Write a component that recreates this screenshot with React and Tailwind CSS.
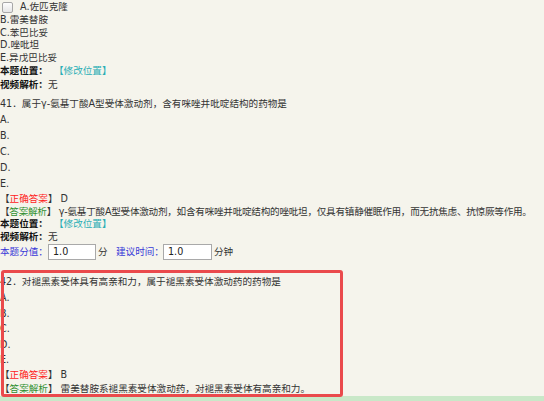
export default function App() {
  const ff = "font-['DejaVu_Sans','Noto_Sans_CJK_SC',sans-serif]";
  return (
    <div className={`relative w-[544px] h-[401px] overflow-hidden bg-[#f5f4ec] text-[#333] text-[9.6px] flex flex-col whitespace-nowrap ${ff}`}>
      <div className="flex-1 min-h-0 flex flex-col">
        {/* previous question tail */}
        <div className="flex items-center h-[14px] shrink-0">
          <span className="ml-[2px] w-[11px] h-[11px] border border-[#a8a8a8] rounded-[2px] bg-gradient-to-b from-[#fdfdfd] to-[#e6e6e6]" />
          <span className="ml-[7px]">A.佐匹克隆</span>
        </div>
        <div className="leading-[12.5px] h-[12.5px]">B.雷美替胺</div>
        <div className="leading-[12.5px] h-[12.5px]">C.苯巴比妥</div>
        <div className="leading-[12.5px] h-[12.5px]">D.唑吡坦</div>
        <div className="leading-[12.5px] h-[12.5px]">E.异戊巴比妥</div>
        <div className="leading-[14px] h-[14px] flex">
          <span className="font-bold text-[#111] w-[54px]">本题位置：</span>
          <span className="text-[#2aaeb5]">【修改位置】</span>
        </div>
        <div className="leading-[14px] h-[14px]">
          <span className="font-bold text-[#111]">视频解析：</span>无
        </div>

        {/* question 41 */}
        <div className="mt-[4px] leading-[16px] h-[16px]">41．属于γ-氨基丁酸A型受体激动剂，含有咪唑并吡啶结构的药物是</div>
        <div className="leading-[16px] h-[16px]">A.</div>
        <div className="leading-[16px] h-[16px]">B.</div>
        <div className="leading-[16px] h-[16px]">C.</div>
        <div className="leading-[16px] h-[16px]">D.</div>
        <div className="leading-[16px] h-[16px]">E.</div>
        <div className="leading-[13px] h-[13px]">
          【<span className="text-[#f22]">正确答案</span>】 D
        </div>
        <div className="leading-[13px] h-[13px] tracking-[-0.25px]">
          【<span className="text-[#2f8f2f]">答案解析</span>】 γ-氨基丁酸A型受体激动剂，如含有咪唑并吡啶结构的唑吡坦，仅具有镇静催眠作用，而无抗焦虑、抗惊厥等作用。
        </div>
        <div className="leading-[12px] h-[12px] flex">
          <span className="font-bold text-[#111] w-[54px]">本题位置：</span>
          <span className="text-[#2aaeb5]">【修改位置】</span>
        </div>
        <div className="leading-[14px] h-[14px]">
          <span className="font-bold text-[#111]">视频解析：</span>无
        </div>
        <div className="flex items-center h-[16px] shrink-0">
          <span className="text-[#3838d8] w-[48px] shrink-0">本题分值：</span>
          <div className="w-[48px] h-[16px] shrink-0 border border-[#a9a9a9] bg-white pl-[4px] leading-[14px] text-[#222]">1.0</div>
          <span className="ml-[2px] w-[18px] shrink-0">分</span>
          <span className="text-[#3838d8] w-[47px] shrink-0">建议时间：</span>
          <div className="w-[49px] h-[16px] shrink-0 border border-[#a9a9a9] bg-white pl-[4px] leading-[14px] text-[#222]">1.0</div>
          <span className="ml-[2px]">分钟</span>
        </div>

        {/* question 42 */}
        <div className="mt-[14px] leading-[16px] h-[16px]">42．对褪黑素受体具有高亲和力，属于褪黑素受体激动药的药物是</div>
        <div className="leading-[15.6px] h-[15.6px]">A.</div>
        <div className="leading-[15.6px] h-[15.6px]">B.</div>
        <div className="leading-[15.6px] h-[15.6px]">C.</div>
        <div className="leading-[15.6px] h-[15.6px]">D.</div>
        <div className="leading-[15.6px] h-[15.6px]">E.</div>
        <div className="leading-[14px] h-[14px]">
          【<span className="text-[#f22]">正确答案</span>】 B
        </div>
        <div className="leading-[13px] h-[13px]">
          【<span className="text-[#2f8f2f]">答案解析</span>】 雷美替胺系褪黑素受体激动药，对褪黑素受体有高亲和力。
        </div>
      </div>
      <div className="h-[5px] shrink-0 bg-[#c9e8c8]" />

      {/* annotation box */}
      <div className="absolute left-[1px] top-[270px] w-[342px] h-[127px] border-[3px] border-[#ea4a4c] rounded-[3px]" />
    </div>
  );
}
